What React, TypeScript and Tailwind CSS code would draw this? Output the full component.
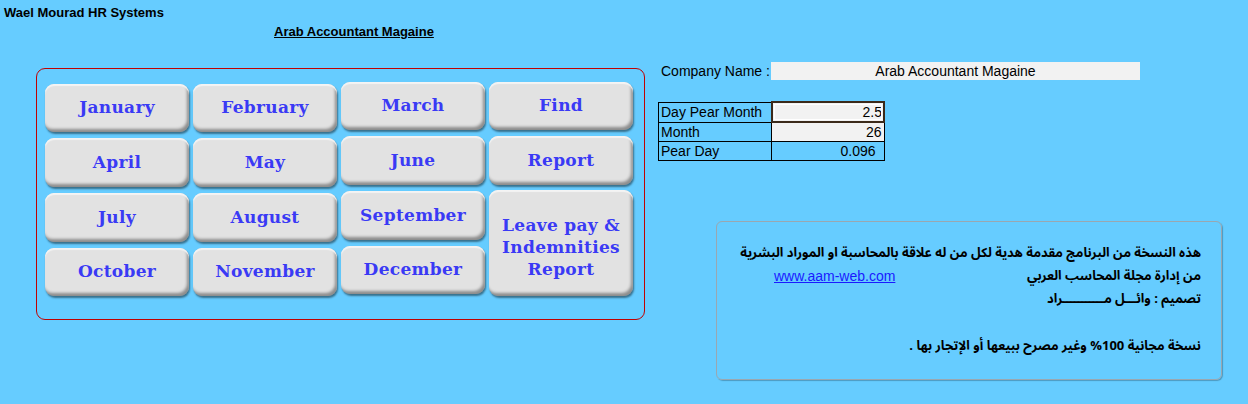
import React from 'react';

const months = [
  'January', 'February', 'March', 'Find',
  'April', 'May', 'June', 'Report',
  'July', 'August', 'September',
];

const btn =
  "flex items-center justify-center rounded-[9px] bg-[#e2e2e2] text-[#3a3af5] font-bold text-[17px] tracking-[0.3px] shadow-[inset_0_2px_1px_#f4f4f4,inset_-2px_-3px_3px_rgba(0,0,0,0.38),1px_2px_2px_rgba(0,0,0,0.45)]";

const App: React.FC = () => {
  return (
    <div className="w-[1248px] h-[404px] bg-[#66CCFF] overflow-hidden font-['Liberation_Sans',sans-serif] text-black">
      <div className="pt-[5px] pl-[4px] h-[25px] text-[13px] font-bold leading-[16px]">
        Wael Mourad HR Systems
      </div>
      <div className="pl-[274px] h-[37px] text-[13px] font-bold underline leading-[14px]">
        Arab Accountant Magaine
      </div>

      <div className="flex">
        {/* month buttons */}
        <div className="ml-[36px] mt-[6px] w-[609px] h-[252px] rounded-[9px] border-[1.5px] border-[#c00000] pl-[8px] pt-[15px]">
          <div className="grid grid-cols-[144px_144px_144px_144px] grid-rows-[48px_49px_49px_48px] gap-x-[4px] gap-y-[6px] font-['DejaVu_Serif',serif]">
            {months.map((m, i) => (
              <button
                key={m}
                className={`${btn} ${i % 4 >= 2 ? '-translate-y-[2px]' : ''}`}
              >
                {m}
              </button>
            ))}
            <button className={`${btn} row-span-2 h-[106px] -translate-y-[3px] leading-[22px] text-center pt-[8px]`}>
              Leave pay &amp;<br />Indemnities<br />Report
            </button>
            <button className={btn}>October</button>
            <button className={btn}>November</button>
            <button className={`${btn} -translate-y-[2px]`}>December</button>
          </div>
        </div>

        {/* right side */}
        <div className="ml-[13px] flex flex-col text-[14px]">
          <div className="flex items-center h-[18px]">
            <span className="w-[113px] pl-[3px]">Company Name :</span>
            <div className="w-[369px] h-[18px] bg-[#f2f2f2] text-center leading-[18px]">
              Arab Accountant Magaine
            </div>
          </div>

          <table className="mt-[21px] border-collapse w-[227px] leading-[18px]">
            <tbody>
              <tr>
                <td className="border border-black w-[113px] pl-[2px]">Day Pear Month</td>
                <td className="border-[2px] border-[#3b2a1a] outline outline-1 outline-white -outline-offset-[3px] bg-[#f2f2f2] text-right pr-[1px]">2.5</td>
              </tr>
              <tr>
                <td className="border border-black pl-[2px]">Month</td>
                <td className="border border-black bg-[#f2f2f2] text-right pr-[2px]">26</td>
              </tr>
              <tr>
                <td className="border border-black pl-[2px]">Pear Day</td>
                <td className="border border-black text-right pr-[8px]">0.096</td>
              </tr>
            </tbody>
          </table>

          <div
            dir="rtl"
            className="ml-[58px] mt-[60px] w-[506px] h-[159px] rounded-[6px] border border-[#9aa7b0] shadow-[1px_1px_1px_rgba(0,0,0,0.25)] pt-[20px] pr-[20px] font-['Noto_Sans_Arabic','Noto_Naskh_Arabic','DejaVu_Sans',sans-serif] text-[13px] font-bold leading-[23px] whitespace-nowrap"
          >
            <div>هذه النسخة من البرنامج مقدمة هدية لكل من له علاقة بالمحاسبة او الموراد البشرية</div>
            <div className="flex pl-[57px]">
              <span>من إدارة مجلة المحاسب العربي</span>
              <a
                href="#"
                dir="ltr"
                className="mr-auto font-['Liberation_Sans',sans-serif] font-normal text-[14px] text-[#1a1aff] underline"
              >
                www.aam-web.com
              </a>
            </div>
            <div>تصميم : وائـــل مـــــــــــراد</div>
            <div className="mt-[24px]">نسخة مجانية 100% وغير مصرح ببيعها أو الإتجار بها .</div>
          </div>
        </div>
      </div>
    </div>
  );
};

export default App;
